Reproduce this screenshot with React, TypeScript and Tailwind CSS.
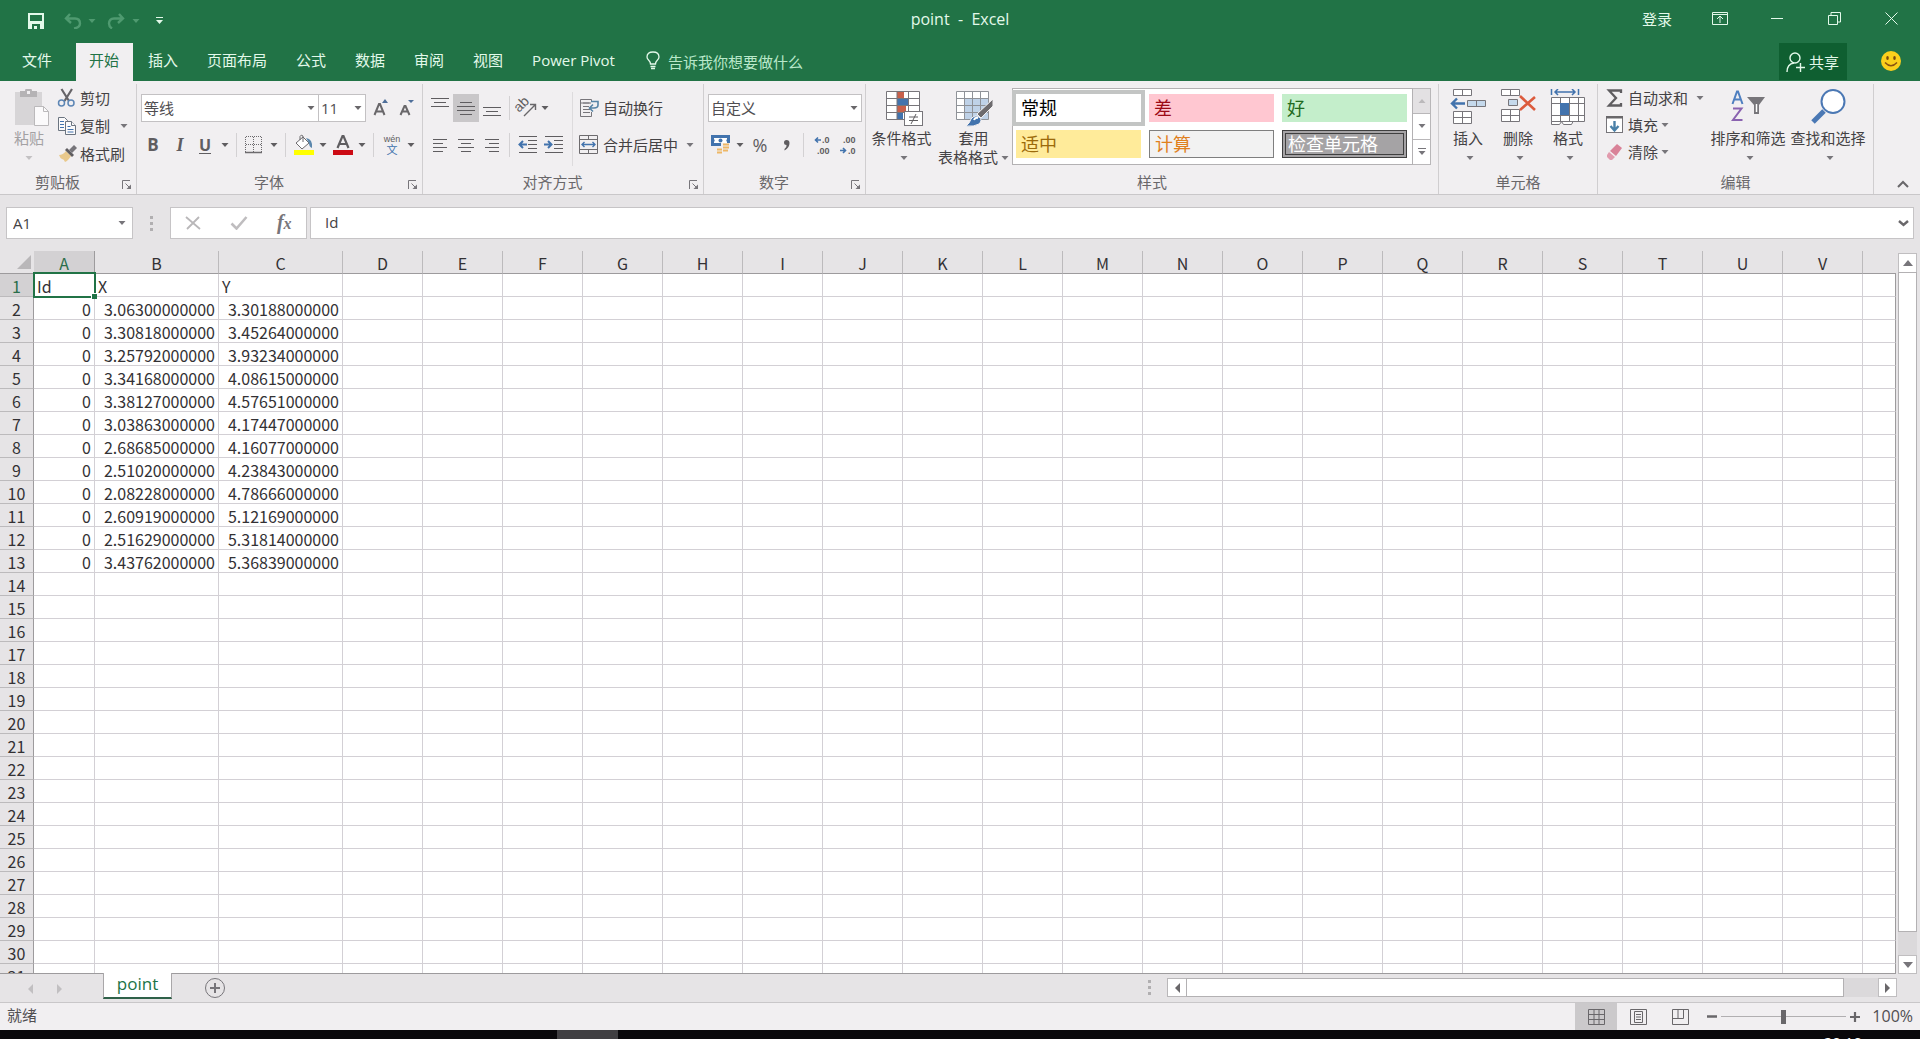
import React from "react";
import type { ReactNode } from "react";

const INK = "#5f5d60";
const BLUE = "#4273ad";

/* ---------- small building blocks ---------- */

function Caret({ className = "" }: { className?: string }) {
  return (
    <svg className={className} width="8" height="4" viewBox="0 0 8 4" fill="currentColor" aria-hidden="true">
      <path d="M0.5 0h7L4 4z" />
    </svg>
  );
}

function Tool({ label, className, children, disabled }: { label: string; className: string; children: ReactNode; disabled?: boolean }) {
  return (
    <button type="button" aria-label={label} disabled={disabled} className={`flex h-7 shrink-0 items-center justify-center text-[#5f5d60] ${className}`}>
      {children}
    </button>
  );
}

function Sep({ className = "" }: { className?: string }) {
  return <span className={`h-6 w-px shrink-0 bg-[#d3d1d3] ${className}`} />;
}

function Group({ title, className, launcher, children }: { title: string; className: string; launcher?: boolean; children: ReactNode }) {
  return (
    <section aria-label={title} className={`flex shrink-0 flex-col border-r border-[#d0ced0] ${className}`}>
      <div className="flex h-[84px]">{children}</div>
      <div className="flex h-6 items-center pt-1 text-[15px] leading-5 text-[#69676a]">
        <span className="flex-1 text-center">{title}</span>
        {launcher && (
          <button type="button" aria-label={`${title}设置`} className="flex w-[21px] items-center pt-1.5">
            <svg width="17" height="10" viewBox="0 0 17 10" fill="none" stroke="#77757a">
              <path d="M7.500 9V.5H15M10.500 3.500l4 4" />
              <path d="M16 4.500V9h-4.500z" fill="#77757a" stroke="none" />
            </svg>
          </button>
        )}
      </div>
    </section>
  );
}

function Small({ icon, children, caret, className = "h-7", disabled }: { icon: ReactNode; children: ReactNode; caret?: string; className?: string; disabled?: boolean }) {
  return (
    <button type="button" disabled={disabled} className={`flex items-center gap-[3px] whitespace-nowrap text-[15px] leading-5 text-[#444244] ${className}`}>
      {icon}
      <span>{children}</span>
      {caret && (
        <span className={`-ml-[3px] flex justify-center text-[#77757a] ${caret}`}>
          <Caret />
        </span>
      )}
    </button>
  );
}

function Big({ icon, lines, className, inlineCaret }: { icon: ReactNode; lines: string[]; className: string; inlineCaret?: boolean }) {
  return (
    <button type="button" className={`flex shrink-0 flex-col items-center whitespace-nowrap pt-[5px] text-[15px] leading-[19px] text-[#444244] ${className}`}>
      <span className="flex h-10 items-start">{icon}</span>
      <span>{lines[0]}</span>
      <span className="flex h-[19px] items-center gap-[3px]">
        {lines[1] && <span>{lines[1]}</span>}
        <Caret className={inlineCaret ? "text-[#77757a]" : "ml-1 text-[#77757a]"} />
      </span>
    </button>
  );
}

function Picker({ label, value, className }: { label: string; value: string; className: string }) {
  return (
    <label className={`relative flex h-7 shrink-0 ${className}`}>
      <select aria-label={label} className="h-full w-full appearance-none border border-[#c3c1c3] bg-white pl-0.5 pr-4 text-[15px] leading-5 text-[#504e51] outline-none">
        <option>{value}</option>
      </select>
      <Caret className="pointer-events-none absolute right-1 top-3 text-[#69676a]" />
    </label>
  );
}

function Lines({ rows, y = 0 }: { rows: [number, number][]; y?: number }) {
  return (
    <svg width="20" height="20" viewBox="0 0 20 20" stroke={INK} fill="none" aria-hidden="true">
      {rows.map(([a, b], i) => (
        <path key={i} d={`M${a} ${y + i * 4 + 0.5}H${b}`} />
      ))}
    </svg>
  );
}

/* ---------- ribbon icons ---------- */

const pasteIcon = (
  <svg width="42" height="40" viewBox="0 0 42 40">
    <path d="M7 3h27v33H7z" fill="#d7d5d7" />
    <path d="M12 2h5q0-3 3.500-3t3.500 3h5v6H12z" fill="#b5b3b5" />
    <rect x="19" y="2" width="3" height="3" fill="#f1eff1" />
    <path d="M26.500 17.500h9l5 5v14h-14z" fill="#fbfafb" stroke="#bbb9bb" />
    <path d="M35.500 17.500v5h5" fill="none" stroke="#bbb9bb" />
  </svg>
);

const cutIcon = (
  <svg width="20" height="20" viewBox="0 0 20 20" fill="none">
    <path d="M4.500 1l7.500 12M15 1L7.500 13" stroke="#666468" strokeWidth="2.200" />
    <circle cx="4.500" cy="15" r="3" stroke="#5d86b5" strokeWidth="1.500" />
    <circle cx="14" cy="15" r="3" stroke="#5d86b5" strokeWidth="1.500" />
  </svg>
);

const copyIcon = (
  <svg width="20" height="20" viewBox="0 0 20 20" fill="#fbfafb" stroke="#6b7480">
    <path d="M1.500 1.500h6l3 3v10h-9z" />
    <path d="M3 5.500h4M3 8.500h4M3 11.500h4" stroke={BLUE} />
    <path d="M8.500 5.500h6l4 4v9h-10z" />
    <path d="M14.500 5.500v4h4" />
    <path d="M10.500 10.500h3M10.500 13.500h6M10.500 16h6" stroke={BLUE} />
  </svg>
);

const brushIcon = (
  <svg width="20" height="20" viewBox="0 0 20 20">
    <path d="M2 11q4 0 7-4l5 5q-3 5-6 6q-1-3-3-3q-2-1-3-4z" fill="#e9c98c" />
    <path d="M8 6l2-2 7 7-2 2z" fill="#5f5d60" />
    <path d="M12 6l5-5 3 3-5 5z" fill="#77757a" />
  </svg>
);

const bordersIcon = (
  <svg width="18" height="18" viewBox="0 0 18 18" fill="none" stroke="#6d6b6e">
    <path d="M.5 1v15M8.500 1v15M16.500 1v15M1 .5h16M1 8.500h16" strokeDasharray="1 1" />
    <path d="M0 16.500h17" strokeWidth="1.500" />
  </svg>
);

const bucketIcon = (
  <svg width="22" height="22" viewBox="0 0 22 22">
    <path d="M3 9l7-6 6 6-7 6z" fill="#fff" stroke="#6d6b6e" />
    <path d="M7 6V2.500Q8 0 10 2v6" fill="none" stroke="#6d6b6e" />
    <path d="M13 4q7 1 6 10q-3-1-3-5z" fill="#5b87ac" />
    <rect x="1" y="16" width="20" height="5" fill="#ffff00" />
  </svg>
);

const fontColorIcon = (
  <svg width="22" height="22" viewBox="0 0 22 22">
    <path d="M5.500 14L10.500 2h1l5 12M7 10h8" stroke="#5f5d60" strokeWidth="2.200" fill="none" />
    <rect x="1" y="16" width="20" height="5" fill="#cc0a14" />
  </svg>
);

const orientIcon = (
  <svg width="22" height="20" viewBox="0 0 22 20" fill="none" stroke="#69676a" className="overflow-visible">
    <text x="3" y="15" transform="rotate(-45 3 15)" fontSize="14" fontFamily="Liberation Sans, sans-serif" fill="#5f5d60" stroke="none">ab</text>
    <path d="M8 18L19 7M14 6.500h5.500V12" strokeWidth="1.400" />
  </svg>
);

function indent(flip: boolean) {
  return (
    <svg width="20" height="18" viewBox="0 0 20 18" fill="none" stroke={INK}>
      <path d="M1 .5h18M10 4.500h9M10 8.500h9M10 12.500h9M1 16.500h18" />
      <path d={flip ? "M0 8.500h7M4 5l3.500 3.500L4 12" : "M9 8.500H2M5 5L1.500 8.500 5 12"} stroke={BLUE} strokeWidth="2" />
    </svg>
  );
}

const wrapIcon = (
  <svg width="22" height="20" viewBox="0 0 22 20" fill="none" stroke="#77757a">
    <path d="M13.500 3V1.500h-11v17h11V14M13 5h-8M11 8.500H5M12 11.500H5M12 14.500H5" />
    <path d="M2.500 5h9" />
    <path d="M13 3.500h7V7q0 3-4 3h-4M15 6.500L11.500 10l3.500 3.500" stroke="#5784a6" strokeWidth="1.600" />
  </svg>
);

const mergeIcon = (
  <svg width="22" height="20" viewBox="0 0 22 20" fill="none" stroke="#6d6b6e">
    <path d="M1.500.5h18v18h-18zM1.500 4.500h18M1.500 14.500h18M10.500.5v4M10.500 14.500v4" />
    <path d="M4 9.500h13M6.500 7L4 9.500 6.500 12M14.500 7L17 9.500 14.500 12" stroke={BLUE} strokeWidth="1.400" />
  </svg>
);

const moneyIcon = (
  <svg width="20" height="20" viewBox="0 0 20 20">
    <rect x="0" y="0" width="19" height="11" fill={BLUE} />
    <path d="M3 3h13v1q-1.500 1.500 0 3v1H3V7q1.500-1.500 0-3z" fill="#fff" />
    <circle cx="9.500" cy="5.500" r="2" fill={BLUE} />
    <path d="M10 8h9v11h-6v-2h-3z" fill="#f1eff1" />
    <path d="M12 9.500h6M12 12.500h6M6 14.500h5M6 17.500h5M12 15.500h5" stroke="#eeb766" strokeWidth="2" />
  </svg>
);

function decimals(more: boolean) {
  return (
    <svg width="18" height="22" viewBox="0 0 18 22" fill="#5f5d60" fontFamily="Liberation Sans, sans-serif" fontSize="9" fontWeight="700" className="overflow-visible">
      <text x={more ? 9 : 4} y="9">{more ? ".0" : ".00"}</text>
      <text x={more ? 4 : 9} y="20">{more ? ".00" : ".0"}</text>
      <path d={more ? "M8 6H2.500M5 3.500L2.500 6 5 8.500" : "M1 16.500h5.500M4 14l2.500 2.500L4 19"} stroke={BLUE} strokeWidth="1.600" fill="none" />
    </svg>
  );
}

const condIcon = (
  <svg width="38" height="38" viewBox="0 0 38 38" className="ml-1">
    <path d="M1.500 2.500h33v28h-33z" fill="#fff" />
    <path d="M12 3h7v7h-7z" fill="#c8604a" />
    <path d="M12 10h11v7H12z" fill={BLUE} />
    <path d="M12 17h9v7h-9z" fill="#c8604a" />
    <path d="M12 24h6v6h-6z" fill={BLUE} />
    <path d="M1.500 2.500h33v28h-33zM1.500 9.500h33M1.500 16.500h33M1.500 23.500h33M12 2.500v28M23.500 2.500v28" fill="none" stroke="#77757a" />
    <rect x="19.500" y="22.500" width="18" height="14" fill="#fff" stroke="#77757a" />
    <path d="M24 28h9M24 31.500h9M31 25l-5 10" stroke="#5f5d60" fill="none" />
  </svg>
);

const tableIcon = (
  <svg width="40" height="38" viewBox="0 0 40 38" className="ml-0.5">
    <path d="M1.500 2.500h32v28h-32z" fill="#fff" />
    <path d="M9 9h24v21H9z" fill="#bfd2e8" />
    <path d="M1.500 2.500h32v28h-32zM1.500 9.500h32M1.500 16.500h32M1.500 23.500h32M9.500 2.500v28M17.500 2.500v28M25.500 2.500v28" fill="none" stroke="#8f9298" />
    <path d="M38 10v7L26 29l-4-4z" fill="#6d6b6e" stroke="#f1eff1" />
    <path d="M11 37q4-3 5-7q4-5 8-2t0 7q-5 3-13 2z" fill={BLUE} stroke="#f1eff1" />
    <path d="M19 31q1-3 4-2" stroke="#fff" fill="none" strokeWidth="2" />
  </svg>
);

const insertIcon = (
  <svg width="38" height="38" viewBox="0 0 38 38" fill="#fff" stroke="#77757a">
    <path d="M4.500.5h18v6h-18zM13.500.5v6M4.500 22.500h18v12h-18zM13.500 22.500v12M4.500 28.500h18" />
    <path d="M18.500 11.500h18v6h-18zM27.500 11.500v6" fill="#c5d9ec" />
    <path d="M16 14.500H3M8 9.500l-5 5 5 5" fill="none" stroke={BLUE} strokeWidth="2.400" />
  </svg>
);

const deleteIcon = (
  <svg width="38" height="38" viewBox="0 0 38 38" fill="#fff" stroke="#77757a">
    <path d="M2.500.5h18v6h-18zM11.500.5v6M2.500 20.500h18v12h-18zM11.500 20.500v12M2.500 26.500h18" />
    <path d="M9.500 10.500h9v6h-9z" fill="#c5d9ec" />
    <path d="M21 7l15 14M36 8L21 21" fill="none" stroke="#dc5b3d" strokeWidth="2.600" />
  </svg>
);

const formatIcon = (
  <svg width="36" height="38" viewBox="0 0 36 38" fill="#fff" stroke="#77757a">
    <path d="M1.500 31.500v4h8l2-3 2 3h8l2-4" />
    <path d="M1.500 8.500h33v24h-33zM1.500 14.500h33M1.500 26.500h33M10.500 8.500v24M19.500 8.500v24M28.500 8.500v24" />
    <rect x="10" y="14" width="9" height="12" fill={BLUE} stroke="none" />
    <path d="M1.500 0v6M28.500 0v6M5 3h20M8 0L5 3l3 3M22 0l3 3-3 3" fill="none" stroke={BLUE} strokeWidth="1.500" />
  </svg>
);

const sumIcon = (
  <svg width="20" height="20" viewBox="0 0 20 20">
    <path d="M16 5V2.500H4l7 7.500-7 7.500h12V15" fill="none" stroke="#5f5d60" strokeWidth="2.300" />
  </svg>
);

const fillIcon = (
  <svg width="20" height="20" viewBox="0 0 20 20">
    <rect x="1.500" y="1.500" width="16" height="16" fill="#fff" stroke="#77757a" />
    <path d="M1 1h17v2.500H1z" fill="#69676a" />
    <path d="M9.500 6v9M5.500 11l4 4.500 4-4.500" fill="none" stroke="#4a80a8" strokeWidth="2.400" />
  </svg>
);

const eraserIcon = (
  <svg width="20" height="20" viewBox="0 0 20 20">
    <path d="M12 2l5 4-6 8-6-5z" fill="#d98298" />
    <path d="M4 10l6 5-3 3H5l-3-3v-2z" fill="#e29bae" />
    <path d="M4.500 9.500l6 5" stroke="#f5e4e9" />
  </svg>
);

const sortIcon = (
  <svg width="36" height="38" viewBox="0 0 36 38" fill="none">
    <path d="M2.500 15L7 2.500h1L12.500 15M4 10.500h7" stroke="#4f7fc0" strokeWidth="2" />
    <path d="M3 19.500h8.500L3 31h9.500" stroke="#8a62b0" strokeWidth="2" />
    <path d="M17 8h18l-6 8v9h-5v-9z" fill="#77757a" />
    <path d="M26.500 15v8" stroke="#fff" strokeWidth="1.500" />
  </svg>
);

const findIcon = (
  <svg width="38" height="38" viewBox="0 0 38 38" fill="none">
    <path d="M15 22L4 33" stroke="#4b78b4" strokeWidth="5" />
    <circle cx="24" cy="12.500" r="11.500" fill="#fff" stroke="#4b78b4" strokeWidth="2" />
  </svg>
);

/* ---------- title bar and tabs ---------- */

function TitleBar() {
  return (
    <header className="grid h-[43px] shrink-0 grid-cols-[1fr_auto_1fr] bg-[#217346] pb-1.5 text-[#e3f9ea]">
      <div className="flex items-center pl-[23px] pt-1">
        <Tool label="保存" className="w-[26px]">
          <svg width="16" height="16" viewBox="0 0 16 16" fill="#e3f9ea">
            <path fillRule="evenodd" d="M0 0h16v16H0zM2 2v6h12V2zM4 11v5h2v-3h3v3h3v-5z" />
          </svg>
        </Tool>
        <Tool label="撤消" disabled className="ml-[11px] w-[26px]">
          <svg width="18" height="16" viewBox="0 0 18 16" fill="none" stroke="#4f9a70" strokeWidth="2.400">
            <path d="M6 1L2 5.500 7 10M2 5.500h9q5 0 5 5q0 4-6 5" />
          </svg>
        </Tool>
        <Tool label="撤消选项" disabled className="w-3">
          <Caret className="text-[#4f9a70]" />
        </Tool>
        <Tool label="恢复" disabled className="ml-1 w-[28px]">
          <svg width="18" height="16" viewBox="0 0 18 16" fill="none" stroke="#4f9a70" strokeWidth="2.400">
            <path d="M12 1l4 4.500L11 10M16 5.500H7q-5 0-5 5q0 3 3 5" />
          </svg>
        </Tool>
        <Tool label="恢复选项" disabled className="w-3">
          <Caret className="text-[#4f9a70]" />
        </Tool>
        <Tool label="自定义快速访问工具栏" className="ml-[7px] w-5">
          <svg width="7" height="7" viewBox="0 0 7 7" fill="#e3f9ea">
            <path d="M0 0h7v1H0zM0 3h7L3.500 7z" />
          </svg>
        </Tool>
      </div>
      <h1 className="flex items-center whitespace-pre text-[16px] leading-5">point  -  Excel</h1>
      <div className="flex items-center justify-end pr-[13px]">
        <button type="button" className="text-[15px] leading-5">登录</button>
        <Tool label="功能区显示选项" className="ml-8 w-8">
          <svg width="16" height="13" viewBox="0 0 16 13" fill="none" stroke="#e3f9ea">
            <path d="M.5.5h15v12H.5zM.5 2.500h15M8 11V4.500M5 7l3-3 3 3" />
          </svg>
        </Tool>
        <Tool label="最小化" className="ml-[25px] w-8">
          <svg width="12" height="1"><path d="M0 .5h12" stroke="#e3f9ea" /></svg>
        </Tool>
        <Tool label="向下还原" className="ml-[25px] w-8">
          <svg width="13" height="13" viewBox="0 0 13 13" fill="none" stroke="#e3f9ea">
            <path d="M.5 3.500h9v9h-9zM3 3.500v-3h9.500V10H10" />
          </svg>
        </Tool>
        <Tool label="关闭" className="ml-[25px] w-8">
          <svg width="13" height="13" viewBox="0 0 13 13" stroke="#e3f9ea"><path d="M.5.5l12 12M12.500.5l-12 12" /></svg>
        </Tool>
      </div>
    </header>
  );
}

const TABS = ["开始", "插入", "页面布局", "公式", "数据", "审阅", "视图", "Power Pivot"];

function TabStrip() {
  return (
    <nav className="flex h-[38px] shrink-0 bg-[#217346] text-[15px] leading-5 text-[#e3f9ea]">
      <button type="button" className="w-[76px] pb-1 pl-[22px] text-left">文件</button>
      <div role="tablist" className="flex gap-0.5">
        {TABS.map((t, i) => (
          <button key={t} type="button" role="tab" aria-selected={i === 0} className={`pb-1 pl-[13px] pr-3.5 ${i === 0 ? "bg-[#f1eff1] text-[#217346]" : ""}`}>
            {t}
          </button>
        ))}
      </div>
      <label className="ml-[17px] flex flex-1 items-center gap-2">
        <svg width="14" height="19" viewBox="0 0 14 19" fill="none" stroke="#e3f9ea" strokeWidth="1.300" aria-hidden="true" className="mb-1">
          <path d="M4.500 13q0-2-2-4Q1 7.500 1 6q0-5 6-5t6 5q0 1.500-1.500 3q-2 2-2 4zM4.500 15.500h5M5 17.500h4" />
        </svg>
        <input aria-label="操作说明搜索" placeholder="告诉我你想要做什么" className="w-44 bg-transparent outline-none placeholder:text-[#b9e8ca]" />
      </label>
      <button type="button" className="mb-px flex w-[68px] items-center gap-1 bg-[#0f5f31] pl-[7px]">
        <svg width="19" height="20" viewBox="0 0 19 20" fill="none" stroke="#e3f9ea" strokeWidth="1.400">
          <circle cx="9" cy="6" r="5" />
          <path d="M1 20q0-8 7-9M14.500 11v9M10 15.500h9" />
        </svg>
        共享
      </button>
      <button type="button" aria-label="反馈" className="mb-0.5 ml-[33px] mr-[18px]">
        <svg width="22" height="22" viewBox="0 0 22 22">
          <circle cx="11" cy="11" r="10" fill="#fbd01c" />
          <ellipse cx="7.500" cy="8" rx="1.300" ry="2" fill="#7a4a10" />
          <ellipse cx="14.500" cy="8" rx="1.300" ry="2" fill="#7a4a10" />
          <path d="M5 12.500q6 6.500 12 0" fill="none" stroke="#8a5210" strokeWidth="1.500" />
        </svg>
      </button>
    </nav>
  );
}

/* ---------- ribbon ---------- */

const STYLES: [string, string][] = [
  ["常规", "bg-white text-black outline-4 outline-[#c3c5c4]"],
  ["差", "bg-[#ffc7d1] text-[#9c0a16]"],
  ["好", "bg-[#c4eecb] text-[#1f6a20]"],
  ["适中", "bg-[#ffeb9a] text-[#9c6a0a]"],
  ["计算", "border border-[#7f7f7f] bg-[#f2f2f2] text-[#e0801e]"],
  ["检查单元格", "border-4 border-double border-[#3f3f3f] bg-[#a5a3a5] text-white"],
];

function Ribbon() {
  return (
    <div className="flex h-[114px] shrink-0 border-b border-[#c9c7c9] bg-[#f1eff1] pt-[3px]">
      <Group title="剪贴板" launcher className="w-[137px]">
        <button type="button" disabled className="ml-2 flex w-[42px] flex-col items-center pt-[5px] text-[15px] leading-[19px] text-[#a3a1a3]">
          <span className="h-10">{pasteIcon}</span>
          <span>粘贴</span>
          <span className="flex h-[19px] items-center"><Caret className="text-[#c3c1c3]" /></span>
        </button>
        <div className="ml-[7px] flex flex-col items-start">
          <Small icon={cutIcon}>剪切</Small>
          <Small icon={copyIcon} caret="w-7">复制</Small>
          <Small icon={brushIcon}>格式刷</Small>
        </div>
      </Group>

      <Group title="字体" launcher className="w-[286px]">
        <div className="flex flex-col gap-[9px] pl-1 pt-2.5">
          <div className="flex items-center">
            <Picker label="字体" value="等线" className="w-[178px]" />
            <Picker label="字号" value="11" className="-ml-px w-12" />
            <Tool label="增大字号" className="ml-0.5 w-[26px]">
              <svg width="16" height="18" viewBox="0 0 16 18"><path d="M1.500 16L6 5h1l4.500 11M3 12.500h7" stroke="#69676a" strokeWidth="2" fill="none" /><path d="M9 4l3-4 3 4z" fill="#4f6f9a" /></svg>
            </Tool>
            <Tool label="减小字号" className="w-6">
              <svg width="16" height="18" viewBox="0 0 16 18"><path d="M2.500 16L6.500 7h1l4 9M4 12.500h6" stroke="#69676a" strokeWidth="2" fill="none" /><path d="M10 1h6l-3 3z" fill="#4f6f9a" /></svg>
            </Tool>
          </div>
          <div className="flex items-center">
            <Tool label="加粗" className="w-6"><b className="text-[17px] leading-5">B</b></Tool>
            <Tool label="倾斜" className="w-[30px]"><i className="font-['Liberation_Serif',serif] text-[18px] font-bold leading-5">I</i></Tool>
            <Tool label="下划线" className="w-5"><span className="border-b border-[#5f5d60] text-[16px] font-bold leading-4">U</span></Tool>
            <Tool label="下划线选项" className="w-5"><Caret /></Tool>
            <Sep className="ml-px" />
            <Tool label="边框" className="ml-1.5 w-[22px]">{bordersIcon}</Tool>
            <Tool label="边框选项" className="w-[18px]"><Caret /></Tool>
            <Sep className="ml-0.5" />
            <Tool label="填充颜色" className="ml-1.5 w-6">{bucketIcon}</Tool>
            <Tool label="填充颜色选项" className="w-3.5"><Caret /></Tool>
            <Tool label="字体颜色" className="w-[26px]">{fontColorIcon}</Tool>
            <Tool label="字体颜色选项" className="w-3"><Caret /></Tool>
            <Sep className="ml-[5px]" />
            <Tool label="拼音" className="ml-1.5 w-6">
              <span className="flex flex-col items-center">
                <span className="font-['Liberation_Sans',sans-serif] text-[9px] leading-[9px]">wén</span>
                <span className="text-[11px] leading-[12px] text-[#4273ad]">文</span>
              </span>
            </Tool>
            <Tool label="拼音选项" className="w-3.5"><Caret /></Tool>
          </div>
        </div>
      </Group>

      <Group title="对齐方式" launcher className="w-[281px]">
        <div className="flex w-[149px] flex-col gap-[9px] pl-1 pt-2.5">
          <div className="flex items-center">
            <Tool label="顶端对齐" className="w-[26px]"><Lines y={0} rows={[[1, 19], [4, 16], [1, 19]]} /></Tool>
            <Tool label="垂直居中" className="w-[26px] bg-[#c9c7c9]"><Lines y={4} rows={[[4, 16], [1, 19], [1, 19], [4, 16]]} /></Tool>
            <Tool label="底端对齐" className="w-[26px]"><Lines y={9} rows={[[1, 19], [4, 16], [1, 19]]} /></Tool>
            <Sep className="ml-1" />
            <Tool label="方向" className="ml-1 w-[26px]">{orientIcon}</Tool>
            <Tool label="方向选项" className="w-2.5"><Caret /></Tool>
          </div>
          <div className="flex items-center">
            <Tool label="左对齐" className="w-[26px]"><Lines y={4} rows={[[3, 17], [3, 13], [3, 17], [3, 13]]} /></Tool>
            <Tool label="居中" className="w-[26px]"><Lines y={4} rows={[[2, 18], [5, 15], [2, 18], [5, 15]]} /></Tool>
            <Tool label="右对齐" className="w-[26px]"><Lines y={4} rows={[[3, 17], [7, 17], [3, 17], [7, 17]]} /></Tool>
            <Sep className="ml-1" />
            <Tool label="减少缩进量" className="ml-1 w-7">{indent(false)}</Tool>
            <Tool label="增加缩进量" className="w-6">{indent(true)}</Tool>
          </div>
        </div>
        <div className="mt-2 flex h-[74px] flex-col gap-[9px] border-l border-[#dddbdd] pl-[5px] pt-0.5">
          <Small icon={wrapIcon}>自动换行</Small>
          <Small icon={mergeIcon} caret="w-6">合并后居中</Small>
        </div>
      </Group>

      <Group title="数字" launcher className="w-[162px]">
        <div className="flex flex-col gap-[9px] pl-1 pt-2.5">
          <Picker label="数字格式" value="自定义" className="w-[154px]" />
          <div className="flex items-center">
            <Tool label="会计数字格式" className="w-[26px]">{moneyIcon}</Tool>
            <Tool label="会计数字格式选项" className="w-3"><Caret /></Tool>
            <Tool label="百分比样式" className="w-7"><span className="text-[18px] leading-5">%</span></Tool>
            <Tool label="千位分隔样式" className="w-6">
              <svg width="7" height="11" viewBox="0 0 7 11" fill="#5f5d60"><path d="M1 2.500Q1 0 3.500 0Q6.500 0 6.500 3Q6.500 8 1.500 10.500V9Q4 7 3.500 5Q1 5 1 2.500z" /></svg>
            </Tool>
            <Sep className="ml-[5px]" />
            <Tool label="增加小数位数" className="ml-1 w-7">{decimals(true)}</Tool>
            <Tool label="减少小数位数" className="w-6">{decimals(false)}</Tool>
          </div>
        </div>
      </Group>

      <Group title="样式" className="w-[573px]">
        <Big icon={condIcon} lines={["条件格式"]} className="w-[71px]" />
        <Big icon={tableIcon} lines={["套用", "表格格式"]} inlineCaret className="w-[73px]" />
        <div className="ml-0.5 mt-1 flex h-[77px]">
          <div className="grid w-[401px] grid-cols-3 grid-rows-[28px_28px] gap-2 border border-[#b3b1b3] bg-white pl-[3px] pr-[5px] pt-[5px]">
            {STYLES.map(([name, cls]) => (
              <button key={name} type="button" className={`flex items-center text-[18px] leading-5 ${name === "检查单元格" ? "pl-0.5" : "pl-[5px]"} ${cls}`}>
                {name}
              </button>
            ))}
          </div>
          <div className="flex w-[18px] flex-col divide-y divide-[#b9b7b9] border border-l-0 border-[#b9b7b9] bg-white">
            <button type="button" aria-label="上一行" disabled className="flex flex-1 items-center justify-center bg-[#e3e1e3] text-[#bbb9bb]"><Caret className="rotate-180" /></button>
            <button type="button" aria-label="下一行" className="flex flex-1 items-center justify-center text-[#77757a]"><Caret /></button>
            <button type="button" aria-label="其他样式" className="flex flex-1 flex-col items-center justify-center gap-0.5 text-[#77757a]">
              <span className="h-px w-2 bg-[#77757a]" />
              <Caret />
            </button>
          </div>
        </div>
      </Group>

      <Group title="单元格" className="w-[159px] [&>div:first-child]:pl-1">
        <Big icon={insertIcon} lines={["插入"]} className="w-[50px]" />
        <Big icon={deleteIcon} lines={["删除"]} className="w-[50px]" />
        <Big icon={formatIcon} lines={["格式"]} className="w-[50px]" />
      </Group>

      <Group title="编辑" className="w-[276px]">
        <div className="flex w-[110px] flex-col items-start pl-[7px]">
          <Small icon={sumIcon} caret="w-6" className="h-[27px]">自动求和</Small>
          <Small icon={fillIcon} caret="w-3.5" className="h-[27px]">填充</Small>
          <Small icon={eraserIcon} caret="w-3.5" className="h-[27px]">清除</Small>
        </div>
        <Big icon={sortIcon} lines={["排序和筛选"]} className="w-20" />
        <Big icon={findIcon} lines={["查找和选择"]} className="w-20" />
      </Group>

      <div className="flex flex-1 items-end justify-end pb-1.5 pr-[11px]">
        <button type="button" aria-label="折叠功能区">
          <svg width="12" height="8" viewBox="0 0 12 8" fill="none" stroke="#69676a" strokeWidth="2"><path d="M1 7l5-5 5 5" /></svg>
        </button>
      </div>
    </div>
  );
}

/* ---------- formula bar ---------- */

function Dots() {
  return (
    <span className="flex flex-col gap-[3px]" aria-hidden="true">
      <i className="size-[3px] bg-[#b1afb1]" />
      <i className="size-[3px] bg-[#b1afb1]" />
      <i className="size-[3px] bg-[#b1afb1]" />
    </span>
  );
}

function FormulaBar() {
  return (
    <div className="flex h-14 shrink-0 items-start bg-[#e6e4e6] pl-1.5 pr-1.5 pt-3 text-[15px] text-[#444244]">
      <div className="flex h-8 w-[127px] items-center border border-[#c6c4c6] bg-white">
        <input aria-label="名称框" defaultValue="A1" className="min-w-0 flex-1 bg-transparent pl-1.5 outline-none" />
        <button type="button" aria-label="名称列表" className="mr-1.5 text-[#77757a]"><Caret /></button>
      </div>
      <div className="flex h-8 w-[37px] items-center justify-center"><Dots /></div>
      <div className="flex h-8 w-[137px] items-center justify-around border border-[#c6c4c6] bg-white">
        <button type="button" aria-label="取消" disabled>
          <svg width="16" height="14" viewBox="0 0 16 14" stroke="#b9b7b9" strokeWidth="1.800"><path d="M1 1l14 12M14 1L2 13" /></svg>
        </button>
        <button type="button" aria-label="输入" disabled>
          <svg width="18" height="14" viewBox="0 0 18 14" fill="none" stroke="#bfbdbf" strokeWidth="2.600"><path d="M1.500 7.500l5 5L16.500 1" /></svg>
        </button>
        <button type="button" aria-label="插入函数" className="font-['Liberation_Serif',serif] text-[20px] font-bold italic leading-6 text-[#77757a]">
          f<span className="text-[16px]">x</span>
        </button>
      </div>
      <div className="ml-[3px] flex h-8 flex-1 items-center border border-[#c6c4c6] bg-white">
        <input aria-label="编辑栏" defaultValue="Id" className="min-w-0 flex-1 bg-transparent pb-0.5 pl-3.5 outline-none" />
        <button type="button" aria-label="展开编辑栏" className="mr-1">
          <svg width="11" height="7" viewBox="0 0 11 7" fill="none" stroke="#69676a" strokeWidth="2.400"><path d="M1 1l4.500 4L10 1" /></svg>
        </button>
      </div>
    </div>
  );
}

/* ---------- worksheet ---------- */

const COLUMNS = "ABCDEFGHIJKLMNOPQRSTUV".split("");
const ROWS: string[][] = [
  ["Id", "X", "Y"],
  ["0", "3.06300000000", "3.30188000000"],
  ["0", "3.30818000000", "3.45264000000"],
  ["0", "3.25792000000", "3.93234000000"],
  ["0", "3.34168000000", "4.08615000000"],
  ["0", "3.38127000000", "4.57651000000"],
  ["0", "3.03863000000", "4.17447000000"],
  ["0", "2.68685000000", "4.16077000000"],
  ["0", "2.51020000000", "4.23843000000"],
  ["0", "2.08228000000", "4.78666000000"],
  ["0", "2.60919000000", "5.12169000000"],
  ["0", "2.51629000000", "5.31814000000"],
  ["0", "3.43762000000", "5.36839000000"],
];
const ROW_COUNT = 31;

function Sheet() {
  return (
    <div className="flex min-h-0 flex-1 bg-[#e6e4e6]">
      <div className="min-w-0 flex-1 overflow-hidden border-b border-[#9d9b9d]">
        <table className="w-full table-fixed border-separate border-spacing-0 font-['Noto_Sans_CJK_SC',sans-serif] text-[16px] leading-5 text-[#333134]">
          <colgroup>
            <col className="w-[34px]" />
            {COLUMNS.map((c, i) => (
              <col key={c} className={i === 0 ? "w-[61px]" : i < 3 ? "w-[124px]" : "w-20"} />
            ))}
            <col />
          </colgroup>
          <thead>
            <tr className="h-[23px]">
              <th className="border-b border-[#9d9b9d] p-0">
                <button type="button" aria-label="全选" className="ml-auto mr-[3px] block">
                  <svg width="14" height="14" viewBox="0 0 14 14" fill="#b9b7b9"><path d="M14 0v14H0z" /></svg>
                </button>
              </th>
              {COLUMNS.map((c, i) => (
                <th key={c} scope="col" className={`border-b border-r p-0 pt-0.5 font-normal ${i === 0 ? "border-[#9d9b9d] bg-[#d3d1d3] text-[#2a6e4a]" : "border-b-[#9d9b9d] border-r-[#bcbabc]"}`}>
                  {c}
                </th>
              ))}
              <td className="border-b border-[#9d9b9d] p-0" />
            </tr>
          </thead>
          <tbody>
            {Array.from({ length: ROW_COUNT }, (_, r) => (
              <tr key={r} className="h-[23px] bg-white">
                <th scope="row" className={`border-b border-r border-b-[#bcbabc] border-r-[#9d9b9d] p-0 pt-0.5 font-normal ${r === 0 ? "bg-[#d3d1d3] text-[#2a6e4a]" : "bg-[#e6e4e6]"}`}>
                  {r + 1}
                </th>
                {COLUMNS.map((c, i) => (
                  <td key={c} className={`relative whitespace-nowrap border-b border-r border-[#d3d0d5] p-0 px-[3px] pt-0.5 ${r === 0 ? "text-left" : "text-right"}`}>
                    {ROWS[r]?.[i] ?? ""}
                    {r === 0 && i === 0 && (
                      <span className="pointer-events-none absolute -bottom-0.5 -left-px -right-0.5 -top-0.5 z-10 border-2 border-[#217346]">
                        <i className="absolute -bottom-[3px] -right-[3px] size-1.5 border-l border-t border-white bg-[#217346]" />
                      </span>
                    )}
                  </td>
                ))}
                <td className="border-b border-r border-b-[#d3d0d5] border-r-[#9d9b9d] p-0" />
              </tr>
            ))}
          </tbody>
        </table>
      </div>
      <div className="ml-0.5 mr-[3px] mt-0.5 flex w-[19px] flex-col bg-[#dbd9db]">
        <button type="button" aria-label="向上滚动" className="flex h-5 items-center justify-center border border-[#c0bec0] bg-white">
          <svg width="10" height="6" fill="#77757a"><path d="M0 6h10L5 0z" /></svg>
        </button>
        <div className="-mt-px flex-[660] border border-[#b3b1b3] bg-white" />
        <div className="flex-[23]" />
        <button type="button" aria-label="向下滚动" className="flex h-[19px] items-center justify-center border border-[#c0bec0] bg-white">
          <svg width="10" height="6" fill="#77757a"><path d="M0 0h10L5 6z" /></svg>
        </button>
      </div>
    </div>
  );
}

function SheetTabs() {
  return (
    <div className="flex h-[29px] shrink-0 items-start border-b border-[#c9c7c9] bg-[#e6e4e6]">
      <button type="button" aria-label="上一个工作表" disabled className="ml-7 mt-2.5">
        <svg width="5" height="10" fill="#c1bfc1"><path d="M5 0v10L0 5z" /></svg>
      </button>
      <button type="button" aria-label="下一个工作表" disabled className="ml-6 mt-2.5">
        <svg width="5" height="10" fill="#c1bfc1"><path d="M0 0v10l5-5z" /></svg>
      </button>
      <button type="button" role="tab" aria-selected="true" className="-mt-px ml-[41px] h-[26px] w-[69px] border-x border-b-2 border-x-[#a9a7a9] border-b-[#2f6149] bg-white pb-0.5 text-[17px] leading-5 text-[#217346]">
        point
      </button>
      <button type="button" aria-label="新工作表" className="ml-[33px] mt-1">
        <svg width="20" height="20" viewBox="0 0 20 20" fill="none" stroke="#77757a">
          <circle cx="10" cy="10" r="9.500" />
          <path d="M10 5v10M5 10h10" strokeWidth="2" />
        </svg>
      </button>
      <div className="ml-auto mr-4 mt-1.5"><Dots /></div>
      <div className="mr-[23px] mt-1 flex h-[19px] w-[38%] bg-[#dbd9db]">
        <button type="button" aria-label="向左滚动" className="flex w-5 items-center justify-center border border-[#b9b7b9] bg-white">
          <svg width="5" height="10" fill="#69676a"><path d="M5 0v10L0 5z" /></svg>
        </button>
        <div className="-ml-px flex-[658] border border-[#b3b1b3] bg-white" />
        <div className="flex-[34]" />
        <button type="button" aria-label="向右滚动" className="flex w-[19px] items-center justify-center border border-[#c0bec0] bg-white">
          <svg width="5" height="10" fill="#69676a"><path d="M0 0v10l5-5z" /></svg>
        </button>
      </div>
    </div>
  );
}

function StatusBar() {
  return (
    <footer className="flex h-[27px] shrink-0 items-center bg-[#f1eff1] text-[15px] leading-5 text-[#504e51]">
      <span className="flex-1 pb-[3px] pl-[7px]">就绪</span>
      <button type="button" aria-label="普通视图" aria-pressed="true" className="flex h-full w-[42px] items-center justify-center bg-[#cbc9cb]">
        <svg width="17" height="16" viewBox="0 0 17 16" fill="none" stroke="#69676a"><path d="M.5.5h16v15H.5zM.5 5.500h16M.5 10.500h16M6 .5v15M11 .5v15" /></svg>
      </button>
      <button type="button" aria-label="页面布局视图" className="flex h-full w-[42px] items-center justify-center">
        <svg width="17" height="16" viewBox="0 0 17 16" fill="none" stroke="#69676a"><path d="M.5.5h16v15H.5zM4.500 2.500h8v11h-8zM6 5.500h5M6 8h5M6 10.500h5" /></svg>
      </button>
      <button type="button" aria-label="分页预览" className="flex h-full w-[42px] items-center justify-center">
        <svg width="17" height="16" viewBox="0 0 17 16" fill="none" stroke="#69676a"><path d="M.5.5h16v15H.5zM.5 9.500h11v-9M6 .5v9" /></svg>
      </button>
      <button type="button" aria-label="缩小" className="ml-1.5">
        <svg width="10" height="3"><path d="M0 1.500h10" stroke="#69676a" strokeWidth="2.500" /></svg>
      </button>
      <input
        type="range"
        aria-label="显示比例"
        min="10"
        max="190"
        defaultValue="100"
        className="ml-1 h-4 w-[125px] appearance-none bg-[linear-gradient(#b1afb1,#b1afb1)] bg-[length:100%_1px] bg-center bg-no-repeat [&::-webkit-slider-thumb]:h-3.5 [&::-webkit-slider-thumb]:w-[5px] [&::-webkit-slider-thumb]:appearance-none [&::-webkit-slider-thumb]:bg-[#69676a]"
      />
      <button type="button" aria-label="放大" className="ml-1">
        <svg width="10" height="10"><path d="M0 5h10M5 0v10" stroke="#69676a" strokeWidth="2.200" /></svg>
      </button>
      <span className="ml-3 mr-[7px] w-[41px] pb-px text-right text-[16px]">100%</span>
    </footer>
  );
}

function Taskbar() {
  return (
    <div className="flex h-[9px] shrink-0 overflow-hidden bg-[#09080b]">
      <div className="ml-[557px] w-[61px] bg-[#403f42]" />
      <time className="ml-auto mr-[58px] mt-0.5 text-[15px] leading-5 text-white">20:10</time>
    </div>
  );
}

export default function App() {
  return (
    <div className="flex h-screen flex-col overflow-hidden bg-[#e6e4e6] font-['Open_Sans','Noto_Sans_CJK_SC',sans-serif]">
      <TitleBar />
      <TabStrip />
      <Ribbon />
      <FormulaBar />
      <Sheet />
      <SheetTabs />
      <StatusBar />
      <Taskbar />
    </div>
  );
}
